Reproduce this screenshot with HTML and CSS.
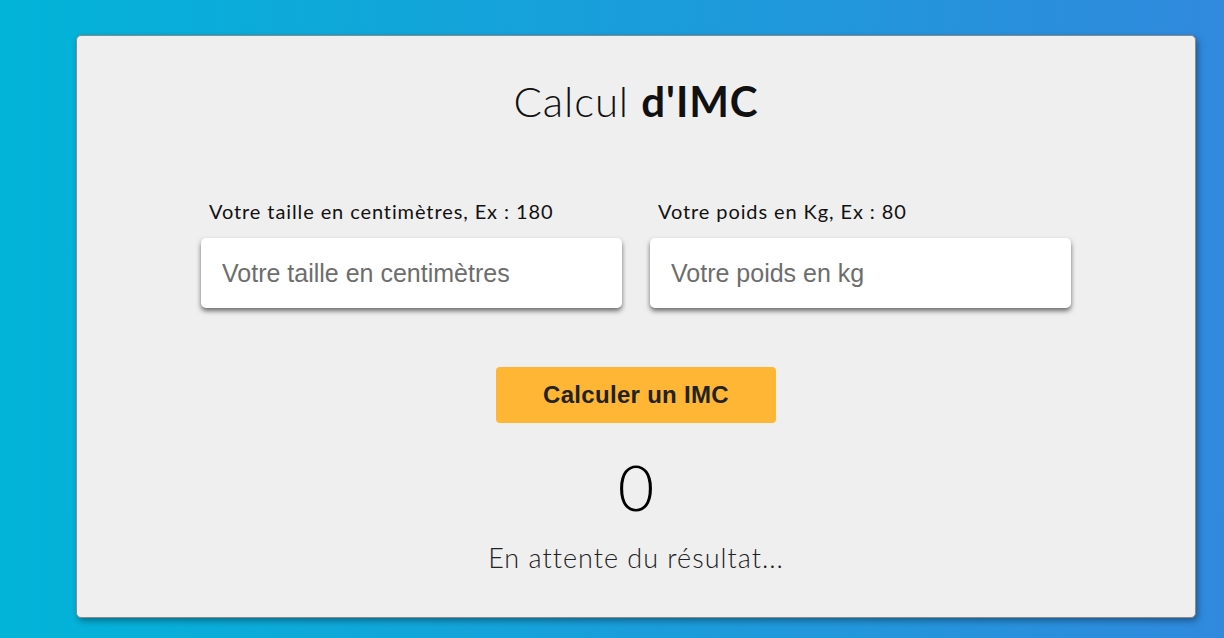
FILE: index.html
```html
<!DOCTYPE html>
<html lang="fr">
<head>
<meta charset="utf-8">
<title>Calcul d'IMC</title>
<link rel="stylesheet" href="styles.css">
</head>
<body>
<main class="card">
  <h1 class="title">Calcul <strong>d'IMC</strong></h1>
  <div class="fields">
    <div class="field">
      <label class="label" for="taille">Votre taille en centimètres, Ex : 180</label>
      <input class="input" id="taille" type="text" placeholder="Votre taille en centimètres">
    </div>
    <div class="field">
      <label class="label" for="poids">Votre poids en Kg, Ex : 80</label>
      <input class="input" id="poids" type="text" placeholder="Votre poids en kg">
    </div>
  </div>
  <button class="btn" type="button">Calculer un IMC</button>
  <p class="value">0</p>
  <p class="status">En attente du résultat...</p>
</main>
</body>
</html>
```

FILE: styles.css
```css
* { box-sizing: border-box; }
html, body { height: 100%; }
body {
  margin: 0;
  background: linear-gradient(to right, #02b4d8, #3089dd);
  font-family: "Lato", "Liberation Sans", sans-serif;
  padding: 35px 28px 20px 76px;
}
.card {
  width: 1120px;
  height: 583px;
  background: #efefef;
  border: 1px solid #8a8a8a;
  border-radius: 5px;
  box-shadow: 2px 3px 6px rgba(0,0,0,0.35);
  display: flex;
  flex-direction: column;
  align-items: center;
}
.title {
  margin: 41px 0 0;
  font-family: "Lato", sans-serif;
  font-weight: 300;
  font-size: 42px;
  line-height: 48px;
  color: #111;
  letter-spacing: 0.9px;
}
.title strong { font-weight: 700; }
.fields {
  display: flex;
  gap: 28px;
  margin-top: 75px;
}
.field {
  display: flex;
  flex-direction: column;
}
.label {
  font-family: "Lato", sans-serif;
  font-size: 20px;
  line-height: 22px;
  letter-spacing: 0.9px;
  color: #111;
  margin: 0 0 16px 8px;
}
.input {
  width: 421px;
  height: 70px;
  border: none;
  border-radius: 5px;
  background: #fff;
  box-shadow: 0 3px 5px rgba(0,0,0,0.55);
  padding: 0 21px;
  font-family: "Liberation Sans", Arial, sans-serif;
  font-size: 25px;
  color: #333;
  outline: none;
}
.input::placeholder { color: #6d6d6d; }
.btn {
  margin-top: 59px;
  width: 280px;
  height: 56px;
  border: none;
  border-radius: 4px;
  background: #ffb635;
  font-family: "Liberation Sans", Arial, sans-serif;
  font-weight: 700;
  font-size: 24px;
  letter-spacing: 0.3px;
  color: #222;
}
.value {
  margin: 28px 0 0;
  font-family: "Lato", sans-serif;
  font-weight: 300;
  font-size: 63px;
  line-height: 72px;
  color: #000;
}
.status {
  margin: 19px 0 0;
  font-family: "Lato", sans-serif;
  font-weight: 300;
  font-size: 27px;
  line-height: 32px;
  letter-spacing: 1px;
  color: #222;
}
```
